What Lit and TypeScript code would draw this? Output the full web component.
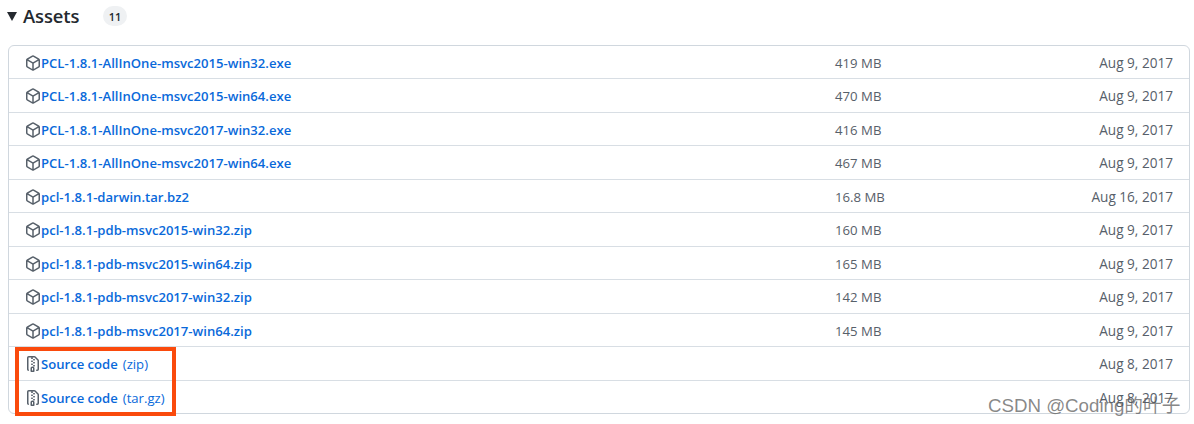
import { LitElement, html, css, svg } from "lit";
import { customElement } from "lit/decorators.js";

const pkg = svg`<path fill-rule="evenodd" d="M8.878.392a1.75 1.75 0 0 0-1.756 0l-5.25 3.045A1.75 1.75 0 0 0 1 4.951v6.098c0 .624.332 1.2.872 1.514l5.25 3.045a1.75 1.75 0 0 0 1.756 0l5.25-3.045c.54-.313.872-.89.872-1.514V4.951c0-.624-.332-1.2-.872-1.514L8.878.392ZM7.875 1.69a.25.25 0 0 1 .25 0l4.63 2.685L8 7.133 3.245 4.375l4.63-2.685ZM2.5 5.677v5.372c0 .09.047.171.125.216l4.625 2.683V8.432L2.5 5.677Zm6.25 8.271 4.625-2.683a.25.25 0 0 0 .125-.216V5.677L8.75 8.432v5.516Z"/>`;
const zip = svg`<path fill-rule="evenodd" d="M3.5 1.75a.25.25 0 0 1 .25-.25h3a.75.75 0 0 0 0 1.5h.5a.75.75 0 0 0 0-1.5h2.086a.25.25 0 0 1 .177.073l2.914 2.914a.25.25 0 0 1 .073.177v8.586a.25.25 0 0 1-.25.25h-.5a.75.75 0 0 0 0 1.5h.5A1.75 1.75 0 0 0 14 13.25V4.664c0-.464-.184-.909-.513-1.237L10.573.513A1.75 1.75 0 0 0 9.336 0H3.75A1.75 1.75 0 0 0 2 1.75v11.5c0 .649.353 1.214.874 1.515a.75.75 0 1 0 .752-1.298.25.25 0 0 1-.126-.217V1.75ZM8.75 3a.75.75 0 0 0 0 1.5h.5a.75.75 0 0 0 0-1.5h-.5ZM6 5.25a.75.75 0 0 1 .75-.75h.5a.75.75 0 0 1 0 1.5h-.5A.75.75 0 0 1 6 5.25Zm2 1.5A.75.75 0 0 1 8.75 6h.5a.75.75 0 0 1 0 1.5h-.5A.75.75 0 0 1 8 6.75Zm-1.25.75a.75.75 0 0 0 0 1.5h.5a.75.75 0 0 0 0-1.5h-.5ZM8 9.75A.75.75 0 0 1 8.75 9h.5a.75.75 0 0 1 0 1.5h-.5A.75.75 0 0 1 8 9.75Zm-.75.75a1.75 1.75 0 0 0-1.75 1.75v3c0 .414.336.75.75.75h2.5a.75.75 0 0 0 .75-.75v-3a1.75 1.75 0 0 0-1.75-1.75h-.5ZM7 12.25a.25.25 0 0 1 .25-.25h.5a.25.25 0 0 1 .25.25v2.25H7v-2.25Z"/>`;

const rows: [string, string, string][] = [
  ["PCL-1.8.1-AllInOne-msvc2015-win32.exe", "419 MB", "Aug 9, 2017"],
  ["PCL-1.8.1-AllInOne-msvc2015-win64.exe", "470 MB", "Aug 9, 2017"],
  ["PCL-1.8.1-AllInOne-msvc2017-win32.exe", "416 MB", "Aug 9, 2017"],
  ["PCL-1.8.1-AllInOne-msvc2017-win64.exe", "467 MB", "Aug 9, 2017"],
  ["pcl-1.8.1-darwin.tar.bz2", "16.8 MB", "Aug 16, 2017"],
  ["pcl-1.8.1-pdb-msvc2015-win32.zip", "160 MB", "Aug 9, 2017"],
  ["pcl-1.8.1-pdb-msvc2015-win64.zip", "165 MB", "Aug 9, 2017"],
  ["pcl-1.8.1-pdb-msvc2017-win32.zip", "142 MB", "Aug 9, 2017"],
  ["pcl-1.8.1-pdb-msvc2017-win64.zip", "145 MB", "Aug 9, 2017"],
];

@customElement("app-root")
export class AppRoot extends LitElement {
  static styles = css`
    :host { display: block; position: relative; height: 424px; overflow: hidden; background: #fff;
      font-family: "Open Sans", "Noto Sans", sans-serif; font-size: 13px; color: #24292f; }
    .head { display: flex; align-items: center; height: 32px; padding-left: 7px; }
    .tri { width: 0; height: 0; border-left: 5px solid transparent; border-right: 5px solid transparent; border-top: 9px solid #24292f; margin-right: 6px; margin-top: 1px; }
    .title { font-size: 18.4px; font-weight: 600; width: 80px; letter-spacing: -0.1px; margin-top: -1px; }
    .count { width: 24px; height: 20px; border-radius: 10px; background: #eff1f3; font-size: 11px; font-weight: 600; display: flex; align-items: center; justify-content: center; }
    .box { margin: 13px 4px 0 8px; border: 1px solid #d0d7de; border-radius: 6px; }
    .row { display: grid; grid-template-columns: 810px 1fr auto; align-items: center; height: 33.5px; box-sizing: border-box; padding: 1.5px 16px 0 16px; border-top: 1px solid #d8dee4; }
    .row:first-child { border-top: 0; height: 32px; padding-top: 2px; }
    .name { display: flex; align-items: center; color: #0969da; font-weight: 600; font-size: 13.1px; white-space: nowrap; }
    .name svg { width: 16px; height: 16px; fill: #57606a; flex: none; }
    .ext { font-weight: 400; margin-left: 5px; }
    .size { color: #57606a; font-size: 13.2px; }
    .date { color: #57606a; font-size: 13.6px; margin-bottom: 0.5px; }
    .highlight { position: absolute; left: 15px; top: 347px; width: 161px; height: 69px; box-sizing: border-box; border: 4px solid #fa4a0c; }
    .mark { position: absolute; left: 988px; top: 390px; font-family: "Liberation Sans", "Noto Sans CJK SC", sans-serif; font-size: 18.7px; color: rgba(90, 90, 90, 0.72); white-space: nowrap; }
  `;

  render() {
    return html`
      <div class="head">
        <span class="tri"></span><span class="title">Assets</span><span class="count">11</span>
      </div>
      <div class="box">
        ${rows.map(([n, s, d]) => html`
          <div class="row">
            <span class="name"><svg viewBox="0 0 16 16">${pkg}</svg>${n}</span>
            <span class="size">${s}</span>
            <span class="date">${d}</span>
          </div>`)}
        ${[["(zip)", "Aug 8, 2017"], ["(tar.gz)", "Aug 8, 2017"]].map(([e, d]) => html`
          <div class="row">
            <span class="name"><svg viewBox="0 0 16 16">${zip}</svg>Source code<span class="ext">${e}</span></span>
            <span></span>
            <span class="date">${d}</span>
          </div>`)}
      </div>
      <div class="highlight"></div>
      <div class="mark">CSDN @Coding的叶子</div>
    `;
  }
}
